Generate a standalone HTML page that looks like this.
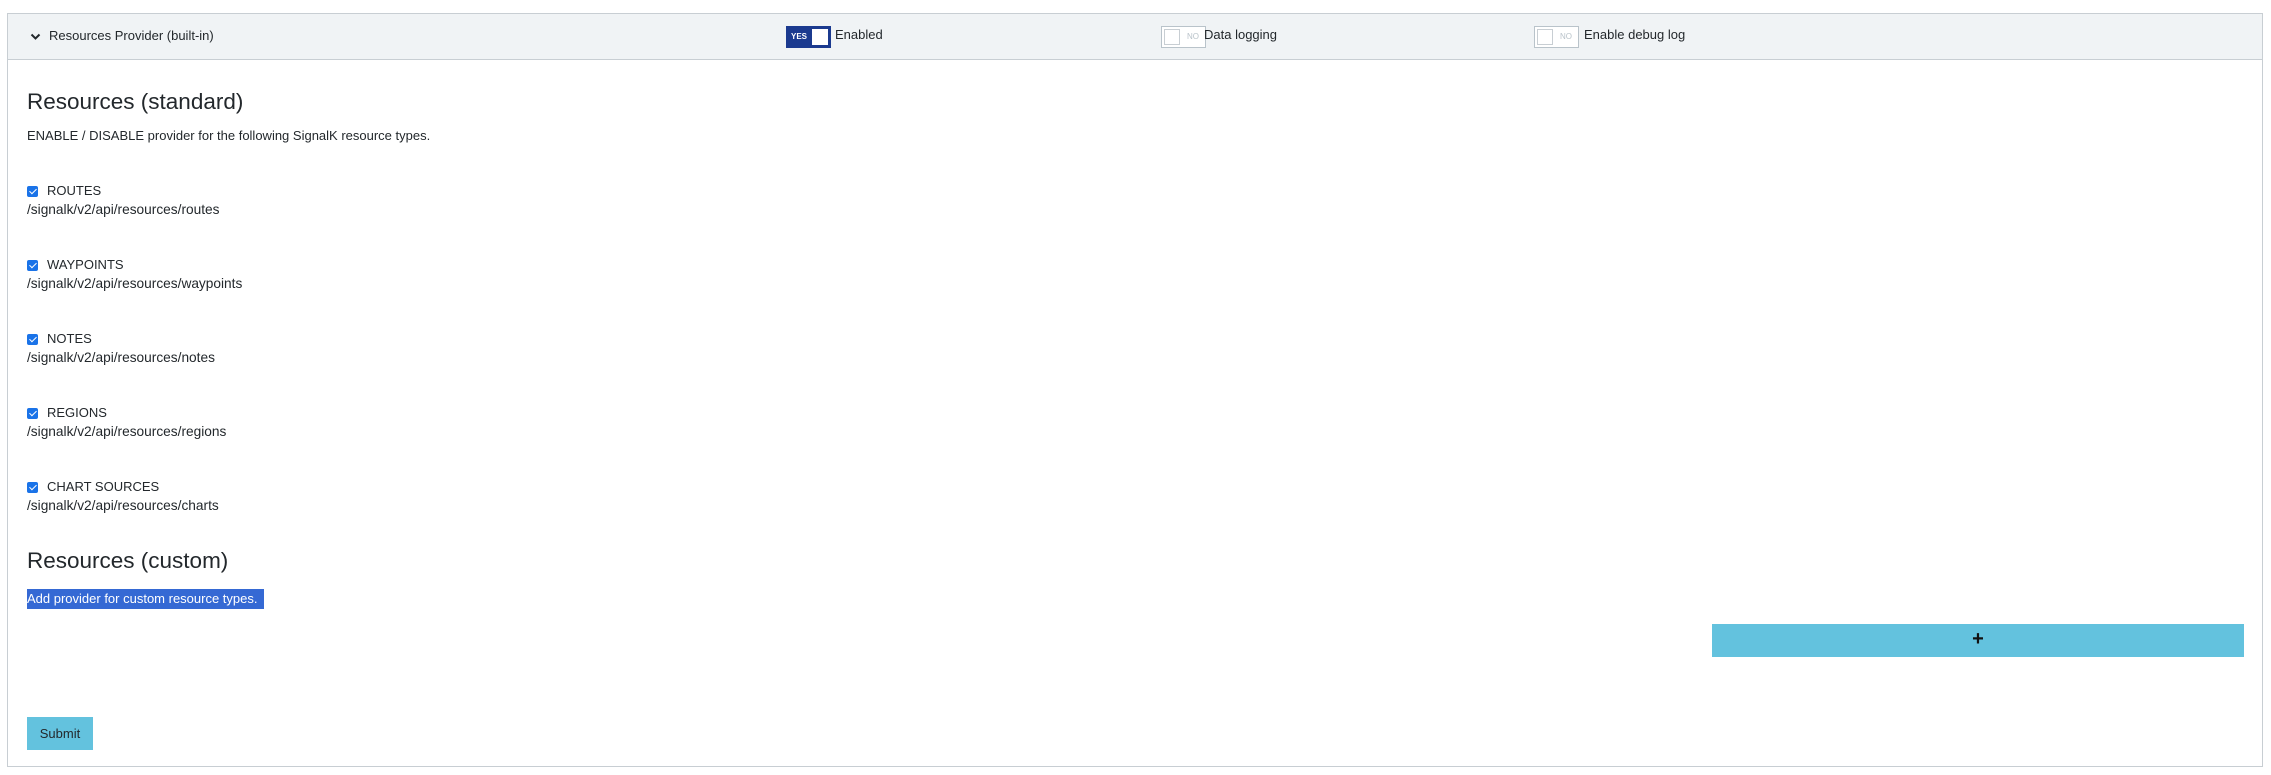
<!DOCTYPE html>
<html><head><meta charset="utf-8"><style>
*{box-sizing:border-box;margin:0;padding:0}
body{width:2271px;height:775px;background:#fff;font-family:"Liberation Sans",Arial,sans-serif;color:#23282c;font-size:13px;position:relative;overflow:hidden}
.panel{position:absolute;left:7px;top:13px;width:2256px;height:754px;border:1px solid #c8ced3}
.hdr{position:absolute;left:0;top:0;right:0;height:46px;background:#f0f3f5;border-bottom:1px solid #c8ced3}
.a{position:absolute;white-space:nowrap}
.p{font-size:13.7px}
.tg{position:absolute;width:45px;height:22px;top:12px}
.yes{background:#1b3a8f;border:1px solid #1b3a8f}
.yes span{position:absolute;left:4px;top:5px;color:#fff;font-size:8px;font-weight:bold}
.yes i{position:absolute;right:2px;top:2px;width:16px;height:16px;background:#fff}
.no{background:#fff;border:1px solid #b9c3ca}
.no i{position:absolute;left:2px;top:2px;width:16px;height:16px;border:1px solid #c8ced3;background:#fff}
.no span{position:absolute;right:6px;top:5px;color:#b9c3ca;font-size:8px}
h2{position:absolute;left:27px;font-size:22.5px;font-weight:normal;color:#23282c}
.cb{position:absolute;left:27px;width:11px;height:11px;background:#1a73e8;border-radius:2px}
.cb:after{content:"";position:absolute;left:3.5px;top:1px;width:3px;height:6px;border:solid #fff;border-width:0 1.5px 1.5px 0;transform:rotate(45deg)}
</style></head><body>
<div class="panel">
<div class="hdr">
<svg class="a" style="left:22px;top:19px" width="11" height="8" viewBox="0 0 11 8"><path d="M1.5 1.5 L5.5 5.5 L9.5 1.5" stroke="#23282c" stroke-width="2" fill="none"/></svg>
<div class="a" style="left:41px;top:14px">Resources Provider (built-in)</div>
<div class="tg yes" style="left:778px"><span>YES</span><i></i></div>
<div class="a" style="left:827px;top:13px">Enabled</div>
<div class="tg no" style="left:1153px"><i></i><span>NO</span></div>
<div class="a" style="left:1196px;top:13px">Data logging</div>
<div class="tg no" style="left:1526px"><i></i><span>NO</span></div>
<div class="a" style="left:1576px;top:13px">Enable debug log</div>
</div>
</div>
<h2 style="top:89px">Resources (standard)</h2>
<div class="a" style="left:27px;top:128px">ENABLE / DISABLE provider for the following SignalK resource types.</div>

<div class="cb" style="top:186px"></div><div class="a" style="left:47px;top:183px">ROUTES</div><div class="a p" style="left:27px;top:202px">/signalk/v2/api/resources/routes</div>
<div class="cb" style="top:260px"></div><div class="a" style="left:47px;top:257px">WAYPOINTS</div><div class="a p" style="left:27px;top:276px">/signalk/v2/api/resources/waypoints</div>
<div class="cb" style="top:334px"></div><div class="a" style="left:47px;top:331px">NOTES</div><div class="a p" style="left:27px;top:350px">/signalk/v2/api/resources/notes</div>
<div class="cb" style="top:408px"></div><div class="a" style="left:47px;top:405px">REGIONS</div><div class="a p" style="left:27px;top:424px">/signalk/v2/api/resources/regions</div>
<div class="cb" style="top:482px"></div><div class="a" style="left:47px;top:479px">CHART SOURCES</div><div class="a p" style="left:27px;top:498px">/signalk/v2/api/resources/charts</div>

<h2 style="top:548px">Resources (custom)</h2>
<div class="a" style="left:27px;top:589px;height:20px;width:237px;background:#3569d4;color:#fff;line-height:20px">Add provider for custom resource types.</div>
<div class="a" style="left:1712px;top:624px;width:532px;height:33px;background:#63c2de;text-align:center;line-height:31px;font-size:20px;font-weight:bold;color:#111">+</div>
<div class="a" style="left:27px;top:717px;width:66px;height:33px;background:#63c2de;text-align:center;line-height:33px">Submit</div>
</body></html>
